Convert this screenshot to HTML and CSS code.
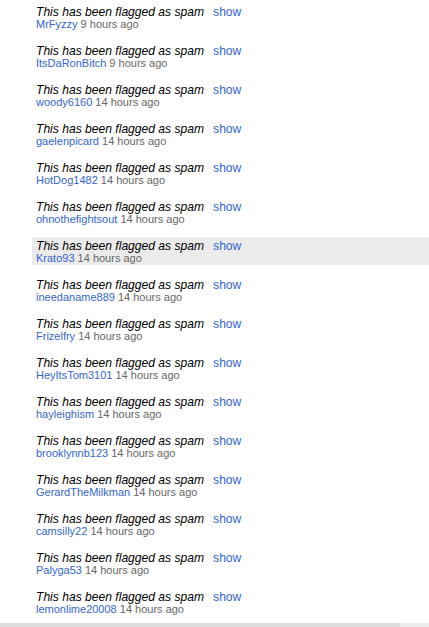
FILE: index.html
```html
<!DOCTYPE html>
<html>
<head>
  <title>Comments</title>
  <link rel="stylesheet" href="styles.css">
</head>
<body>
  <ul class="comments">
    <li class="comment"><p class="flagged"><em>This has been flagged as spam</em><a class="show" href="#">show</a></p><p class="meta"><a href="#">MrFyzzy</a> 9 hours ago</p></li>
    <li class="comment"><p class="flagged"><em>This has been flagged as spam</em><a class="show" href="#">show</a></p><p class="meta"><a href="#">ItsDaRonBitch</a> 9 hours ago</p></li>
    <li class="comment"><p class="flagged"><em>This has been flagged as spam</em><a class="show" href="#">show</a></p><p class="meta"><a href="#">woody6160</a> 14 hours ago</p></li>
    <li class="comment"><p class="flagged"><em>This has been flagged as spam</em><a class="show" href="#">show</a></p><p class="meta"><a href="#">gaelenpicard</a> 14 hours ago</p></li>
    <li class="comment"><p class="flagged"><em>This has been flagged as spam</em><a class="show" href="#">show</a></p><p class="meta"><a href="#">HotDog1482</a> 14 hours ago</p></li>
    <li class="comment"><p class="flagged"><em>This has been flagged as spam</em><a class="show" href="#">show</a></p><p class="meta"><a href="#">ohnothefightsout</a> 14 hours ago</p></li>
    <li class="comment hover"><p class="flagged"><em>This has been flagged as spam</em><a class="show" href="#">show</a></p><p class="meta"><a href="#">Krato93</a> 14 hours ago</p></li>
    <li class="comment"><p class="flagged"><em>This has been flagged as spam</em><a class="show" href="#">show</a></p><p class="meta"><a href="#">ineedaname889</a> 14 hours ago</p></li>
    <li class="comment"><p class="flagged"><em>This has been flagged as spam</em><a class="show" href="#">show</a></p><p class="meta"><a href="#">Frizelfry</a> 14 hours ago</p></li>
    <li class="comment"><p class="flagged"><em>This has been flagged as spam</em><a class="show" href="#">show</a></p><p class="meta"><a href="#">HeyItsTom3101</a> 14 hours ago</p></li>
    <li class="comment"><p class="flagged"><em>This has been flagged as spam</em><a class="show" href="#">show</a></p><p class="meta"><a href="#">hayleighism</a> 14 hours ago</p></li>
    <li class="comment"><p class="flagged"><em>This has been flagged as spam</em><a class="show" href="#">show</a></p><p class="meta"><a href="#">brooklynnb123</a> 14 hours ago</p></li>
    <li class="comment"><p class="flagged"><em>This has been flagged as spam</em><a class="show" href="#">show</a></p><p class="meta"><a href="#">GerardTheMilkman</a> 14 hours ago</p></li>
    <li class="comment"><p class="flagged"><em>This has been flagged as spam</em><a class="show" href="#">show</a></p><p class="meta"><a href="#">camsilly22</a> 14 hours ago</p></li>
    <li class="comment"><p class="flagged"><em>This has been flagged as spam</em><a class="show" href="#">show</a></p><p class="meta"><a href="#">Palyga53</a> 14 hours ago</p></li>
    <li class="comment"><p class="flagged"><em>This has been flagged as spam</em><a class="show" href="#">show</a></p><p class="meta"><a href="#">lemonlime20008</a> 14 hours ago</p></li>
  </ul>
  <div class="footer-bar"></div>
</body>
</html>
```

FILE: styles.css
```css
body {
  margin: 0;
  background: #fff;
  font-family: "Liberation Sans", Arial, sans-serif;
  height: 627px;
  display: flex;
  flex-direction: column;
  overflow: hidden;
}

.comments {
  list-style: none;
  margin: 0;
  padding: 3px 0 0 32px;
  display: flex;
  flex-direction: column;
  gap: 11px;
}

.comment {
  height: 25px;
  padding: 3px 0 0 4px;
}

.comment.hover {
  background: #ebebeb;
}

.comment p {
  margin: 0;
}

.flagged {
  font-size: 12.1px;
  line-height: 13px;
  color: #000;
}

.flagged em {
  font-style: italic;
}

.show {
  margin-left: 9px;
}

a {
  color: #3366cc;
  text-decoration: none;
}

.meta {
  font-size: 11px;
  line-height: 11px;
  color: #666;
}

.footer-bar {
  margin-top: auto;
  height: 4px;
  flex-shrink: 0;
  background: linear-gradient(to right, #dcdcdc 400px, #ececec 400px);
}
```
